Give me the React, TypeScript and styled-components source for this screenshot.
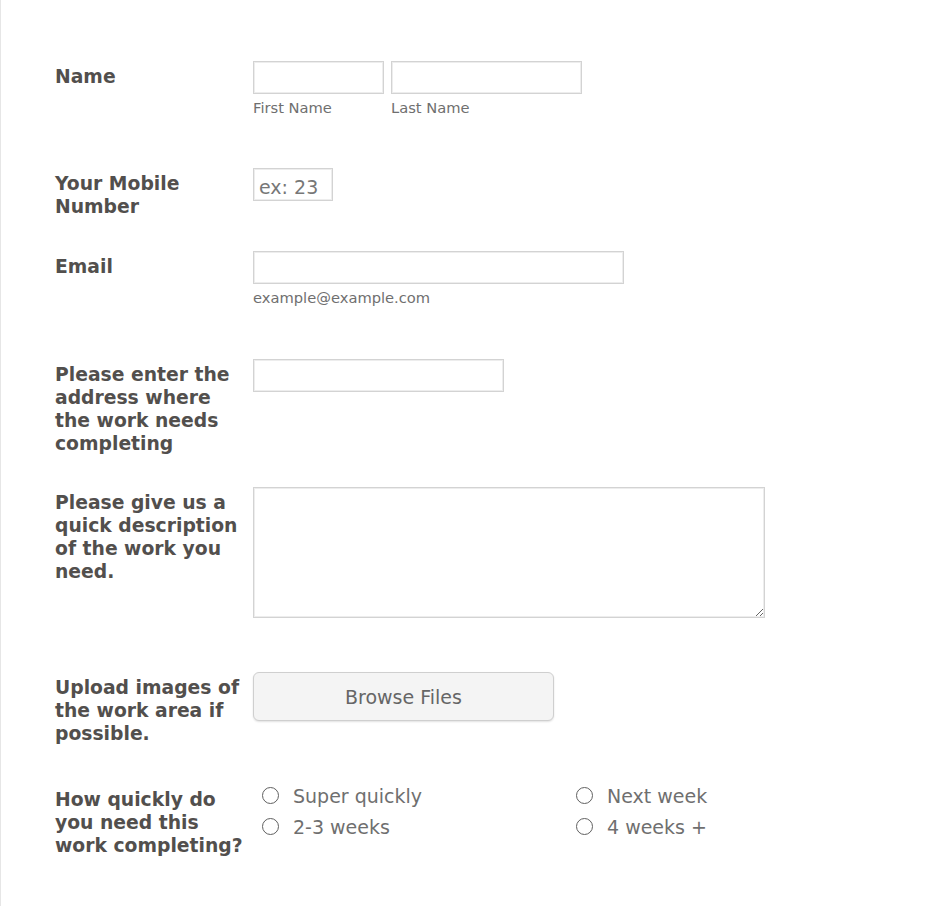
import styled, { createGlobalStyle } from "styled-components"

const GlobalStyle = createGlobalStyle`
  body {
    margin: 0;
    background: #fff;
    font-family: "DejaVu Sans", Verdana, sans-serif;
  }
`

const options = ["Super quickly", "Next week", "2-3 weeks", "4 weeks +"]

export default function App() {
    return (
        <>
            <GlobalStyle/>
            <Page>
                <Form>
                    <Row $after={50}>
                        <Label>Name</Label>
                        <Field>
                            <Inline>
                                <Sub>
                                    <Input $width={131}/>
                                    <SubLabel>First Name</SubLabel>
                                </Sub>
                                <Sub>
                                    <Input $width={191}/>
                                    <SubLabel>Last Name</SubLabel>
                                </Sub>
                            </Inline>
                        </Field>
                    </Row>
                    <Row $after={33}>
                        <Label>Your Mobile Number</Label>
                        <Field>
                            <Input $width={80} placeholder="ex: 23"/>
                        </Field>
                    </Row>
                    <Row $after={51}>
                        <Label>Email</Label>
                        <Field>
                            <Input $width={371}/>
                            <SubLabel>example@example.com</SubLabel>
                        </Field>
                    </Row>
                    <Row $after={32}>
                        <Label>Please enter the address where the work needs completing</Label>
                        <Field>
                            <Input $width={251}/>
                        </Field>
                    </Row>
                    <Row $after={54}>
                        <Label>Please give us a quick description of the work you need.</Label>
                        <Field>
                            <TextArea/>
                        </Field>
                    </Row>
                    <Row $after={35}>
                        <Label>Upload images of the work area if possible.</Label>
                        <Field>
                            <BrowseButton type="button">Browse Files</BrowseButton>
                        </Field>
                    </Row>
                    <Row $after={40}>
                        <Label $top={8}>How quickly do you need this work completing?</Label>
                        <RadioGrid>
                            {options.map(o => (
                                <RadioOption key={o}>
                                    <Radio type="radio" name="speed"/>
                                    <span>{o}</span>
                                </RadioOption>
                            ))}
                        </RadioGrid>
                    </Row>
                </Form>
            </Page>
        </>
    )
}

const Page = styled.div`
    min-height: 100vh;
    border-left: 1px solid #e6e6e6;
    box-sizing: border-box;
`
const Form = styled.div`
    padding: 61px 0 0 54px;
`
const Row = styled.div<{ $after: number }>`
    display: grid;
    grid-template-columns: 198px 1fr;
    align-items: start;
    margin-bottom: ${p => p.$after}px;
`
const Label = styled.div<{ $top?: number }>`
    padding-top: ${p => p.$top ?? 4}px;
    padding-right: 4px;
    font-size: 18.75px;
    line-height: 23px;
    font-weight: bold;
    color: #524f4d;
`
const Field = styled.div`
    display: flex;
    flex-direction: column;
    align-items: flex-start;
`
const Inline = styled.div`
    display: flex;
    gap: 7px;
`
const Sub = styled.div`
    display: flex;
    flex-direction: column;
`
const Input = styled.input<{ $width: number }>`
    width: ${p => p.$width}px;
    height: 33px;
    box-sizing: border-box;
    border: 1px solid #d3d3d3;
    box-shadow: inset 0 0 0 1px #ededed;
    padding: 5px 5px 0;
    font-family: inherit;
    font-size: 19px;
    color: #555;
    outline: none;
    &::placeholder {
        color: #777;
    }
`
const SubLabel = styled.div`
    margin-top: 4px;
    font-size: 14.7px;
    line-height: 20px;
    color: #6f6f6f;
`
const TextArea = styled.textarea`
    width: 512px;
    height: 131px;
    box-sizing: border-box;
    border: 1px solid #d3d3d3;
    box-shadow: inset 0 0 0 1px #ededed;
    font-family: inherit;
    font-size: 16px;
    outline: none;
    margin: 0;
`
const BrowseButton = styled.button`
    width: 301px;
    height: 49px;
    border: 1px solid #cfcfcf;
    border-radius: 6px;
    background: #f4f4f4;
    box-shadow: 0 1px 2px rgba(0, 0, 0, 0.12);
    font-family: inherit;
    font-size: 19px;
    color: #666;
    cursor: pointer;
`
const RadioGrid = styled.div`
    display: grid;
    grid-template-columns: 314px 1fr;
    padding-left: 9px;
`
const RadioOption = styled.label`
    display: flex;
    align-items: center;
    gap: 14px;
    height: 31px;
    font-size: 19px;
    color: #6f6f6f;
`
const Radio = styled.input`
    appearance: none;
    margin: 0;
    width: 17px;
    height: 17px;
    border: 1.3px solid #606060;
    border-radius: 50%;
    background: #fff;
    box-sizing: border-box;
`
